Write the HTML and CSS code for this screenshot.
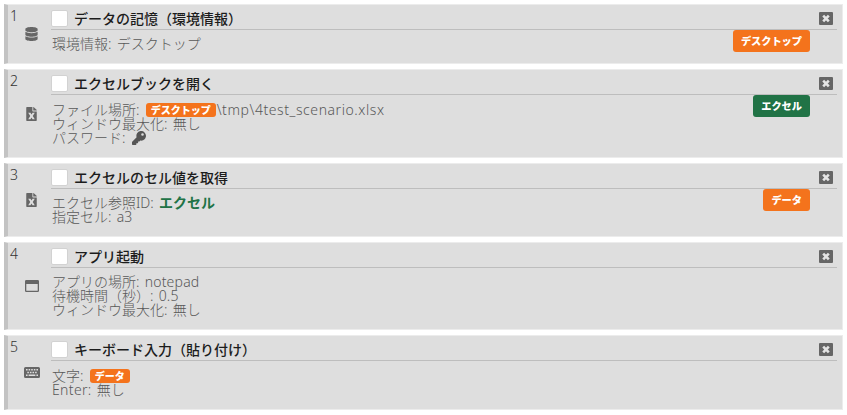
FILE: index.html
```
<!DOCTYPE html>
<html lang="ja">
<head>
<meta charset="utf-8">
<title>シナリオ</title>
<link rel="stylesheet" href="styles.css">
</head>
<body>
<svg class="defs" aria-hidden="true">
  <symbol id="database" viewBox="0 0 448 512"><path d="M448 73v46c0 40-100 73-224 73S0 159 0 119V73C0 33 100 0 224 0s224 33 224 73zm0 103v103c0 40-100 73-224 73S0 319 0 279V176c48 33 136 49 224 49s176-16 224-49zm0 160v103c0 40-100 73-224 73S0 479 0 439V336c48 33 136 49 224 49s176-16 224-49z"/></symbol>
  <symbol id="excel" viewBox="0 0 384 512"><path fill-rule="evenodd" d="M224 136V0H24A24 24 0 0 0 0 24v464a24 24 0 0 0 24 24h336a24 24 0 0 0 24-24V160H248a24 24 0 0 1-24-24zM72 210h82l38 64 38-64h82l-74 121 74 121h-82l-38-64-38 64H72l74-121zM384 128h-128V0h6a24 24 0 0 1 17 7l98 98a24 24 0 0 1 7 17z"/></symbol>
  <symbol id="window" viewBox="0 0 14 12"><path fill-rule="evenodd" d="M1.3 0h11.4A1.3 1.3 0 0 1 14 1.3v9.4a1.3 1.3 0 0 1-1.3 1.3H1.3A1.3 1.3 0 0 1 0 10.700V1.300A1.3 1.3 0 0 1 1.300 0zM1.300 4v6.700h11.400V4z"/></symbol>
  <symbol id="keyboard" viewBox="0 0 16 11"><path class="case" d="M1.500 0h13A1.500 1.500 0 0 1 16 1.500v8a1.500 1.500 0 0 1-1.500 1.500h-13A1.500 1.500 0 0 1 0 9.500v-8A1.500 1.500 0 0 1 1.500 0z"/><path class="keys" d="M2 2h1.600v1.600H2zM4.600 2h1.600v1.600H4.600zM7.200 2h1.600v1.600H7.200zM9.800 2h1.600v1.600H9.800zM12.400 2H14v1.600h-1.600zM3.300 4.700h1.600v1.600H3.300zM5.900 4.700h1.600v1.600H5.900zM8.500 4.700h1.600v1.600H8.500zM11.100 4.700h1.600v1.600h-1.600zM2 7.400h1.600v1.500H2zM4.600 7.400h6.800v1.500H4.600zM12.400 7.400H14v1.500h-1.600z"/></symbol>
  <symbol id="key" viewBox="0 0 512 512"><path fill-rule="evenodd" d="M512 176c0 97-79 176-176 176-11 0-22-1-33-3l-24 27a24 24 0 0 1-18 8h-37v40a24 24 0 0 1-24 24h-40v40a24 24 0 0 1-24 24H24a24 24 0 0 1-24-24v-78c0-6 3-12 7-17l162-162A176 176 0 1 1 512 176zM336 128a48 48 0 1 0 96 0 48 48 0 0 0-96 0z"/></symbol>
  <symbol id="close" viewBox="0 0 14 13"><rect width="14" height="13" rx="1"/><path class="cross" d="M4.200 3.700l5.600 5.600M9.800 3.700L4.200 9.300"/></symbol>
</svg>
<main class="list">
  <section class="card c1">
    <div class="side"><span class="num">1</span><svg class="ico db"><use href="#database"/></svg></div>
    <div class="main">
      <header class="head"><i class="check"></i><h2 class="title">データの記憶（環境情報）</h2><svg class="close"><use href="#close"/></svg></header>
      <div class="body"><div class="rows"><p>環境情報: デスクトップ</p></div><span class="tag">デスクトップ</span></div>
    </div>
  </section>
  <section class="card c2">
    <div class="side"><span class="num">2</span><svg class="ico file"><use href="#excel"/></svg></div>
    <div class="main">
      <header class="head"><i class="check"></i><h2 class="title">エクセルブックを開く</h2><svg class="close"><use href="#close"/></svg></header>
      <div class="body"><div class="rows"><p class="tall">ファイル場所: <span class="chip">デスクトップ</span><span class="path">\tmp\4test_scenario.xlsx</span></p><p>ウィンドウ最大化: 無し</p><p>パスワード: <svg class="key"><use href="#key"/></svg></p></div><span class="tag green">エクセル</span></div>
    </div>
  </section>
  <section class="card c3">
    <div class="side"><span class="num">3</span><svg class="ico file"><use href="#excel"/></svg></div>
    <div class="main">
      <header class="head"><i class="check"></i><h2 class="title">エクセルのセル値を取得</h2><svg class="close"><use href="#close"/></svg></header>
      <div class="body"><div class="rows"><p>エクセル参照ID: <b class="ref">エクセル</b></p><p>指定セル: <span class="latin">a3</span></p></div><span class="tag">データ</span></div>
    </div>
  </section>
  <section class="card c4">
    <div class="side"><span class="num">4</span><svg class="ico win"><use href="#window"/></svg></div>
    <div class="main">
      <header class="head"><i class="check"></i><h2 class="title">アプリ起動</h2><svg class="close"><use href="#close"/></svg></header>
      <div class="body"><div class="rows"><p>アプリの場所: <span class="latin">notepad</span></p><p>待機時間（秒）: <span class="latin">0.5</span></p><p>ウィンドウ最大化: 無し</p></div></div>
    </div>
  </section>
  <section class="card c5">
    <div class="side"><span class="num">5</span><svg class="ico kbd"><use href="#keyboard"/></svg></div>
    <div class="main">
      <header class="head"><i class="check"></i><h2 class="title">キーボード入力（貼り付け）</h2><svg class="close"><use href="#close"/></svg></header>
      <div class="body"><div class="rows"><p class="tall">文字: <span class="chip">データ</span></p><p><span class="enter">Enter:</span> 無し</p></div></div>
    </div>
  </section>
</main>
</body>
</html>
```
FILE: styles.css
```
* { box-sizing: border-box; }
body { margin: 0; background: #fff; color: #585858; font: 300 14px/14px "Noto Sans", "Noto Sans CJK JP", sans-serif; overflow: hidden; }
.defs { position: absolute; width: 0; height: 0; }
.list { display: flex; flex-direction: column; gap: 5px; padding: 4px; }
.card { display: flex; background: #dedede; border: 1px solid #ececec; border-left: 4px solid #c3c3c3; }
.c1 { height: 60px; }
.c2 { height: 89px; }
.c3 { height: 74px; }
.c4 { height: 88px; }
.c5 { height: 75px; }
.side { display: grid; grid-template-columns: 12px 23px; width: 43px; align-items: center; }
.num { align-self: start; padding: 4px 0 0 2px; color: #333; line-height: 14px; }
.ico { justify-self: center; fill: #666; }
.db { width: 13px; height: 14px; }
.file { width: 11px; height: 14px; }
.win { width: 14px; height: 12px; }
.kbd { width: 16px; height: 11px; }
.keys { fill: #dedede; }
.main { flex: 1; padding-right: 5px; }
.head { display: flex; align-items: center; height: 25px; padding: 2px 4px 0 0; border-bottom: 1px solid #bdbdbd; }
.check { width: 17px; height: 17px; background: #fff; border: 1px solid #d2d2d2; border-radius: 2px; }
.title { flex: 1; margin: 1px 0 0 6px; color: #1c1c1c; font-size: 14px; font-weight: 500; line-height: 16px; white-space: nowrap; }
.close { width: 14px; height: 13px; fill: #666; }
.cross { stroke: #e4e4e4; stroke-width: 2.600; fill: none; }
.body { display: flex; justify-content: space-between; align-items: flex-start; padding-right: 27px; }
.rows { padding: 7px 0 0 1px; }
.rows p { display: flex; align-items: center; height: 14px; margin: 0; white-space: pre; word-spacing: 1.600px; }
.rows .tall { height: 15px; }
.path { margin-left: 1px; letter-spacing: .57px; }
.latin { letter-spacing: .2px; }
.enter { letter-spacing: .35px; }
.tag { padding: 0 8px; height: 22px; border-radius: 3px; background: #f4731c; color: #fff; font-size: 10.200px; font-weight: 900; line-height: 22px; }
.green { background: #217346; }
.chip { height: 14px; padding: 0 5px; border-radius: 3px; background: #f4731c; color: #fff; font-size: 10px; font-weight: 900; line-height: 14px; margin: 1px 0 0 1px; }
.ref { color: #217346; font-weight: 700; }
.key { width: 14px; height: 14px; margin-left: 1px; fill: #555; }
```
